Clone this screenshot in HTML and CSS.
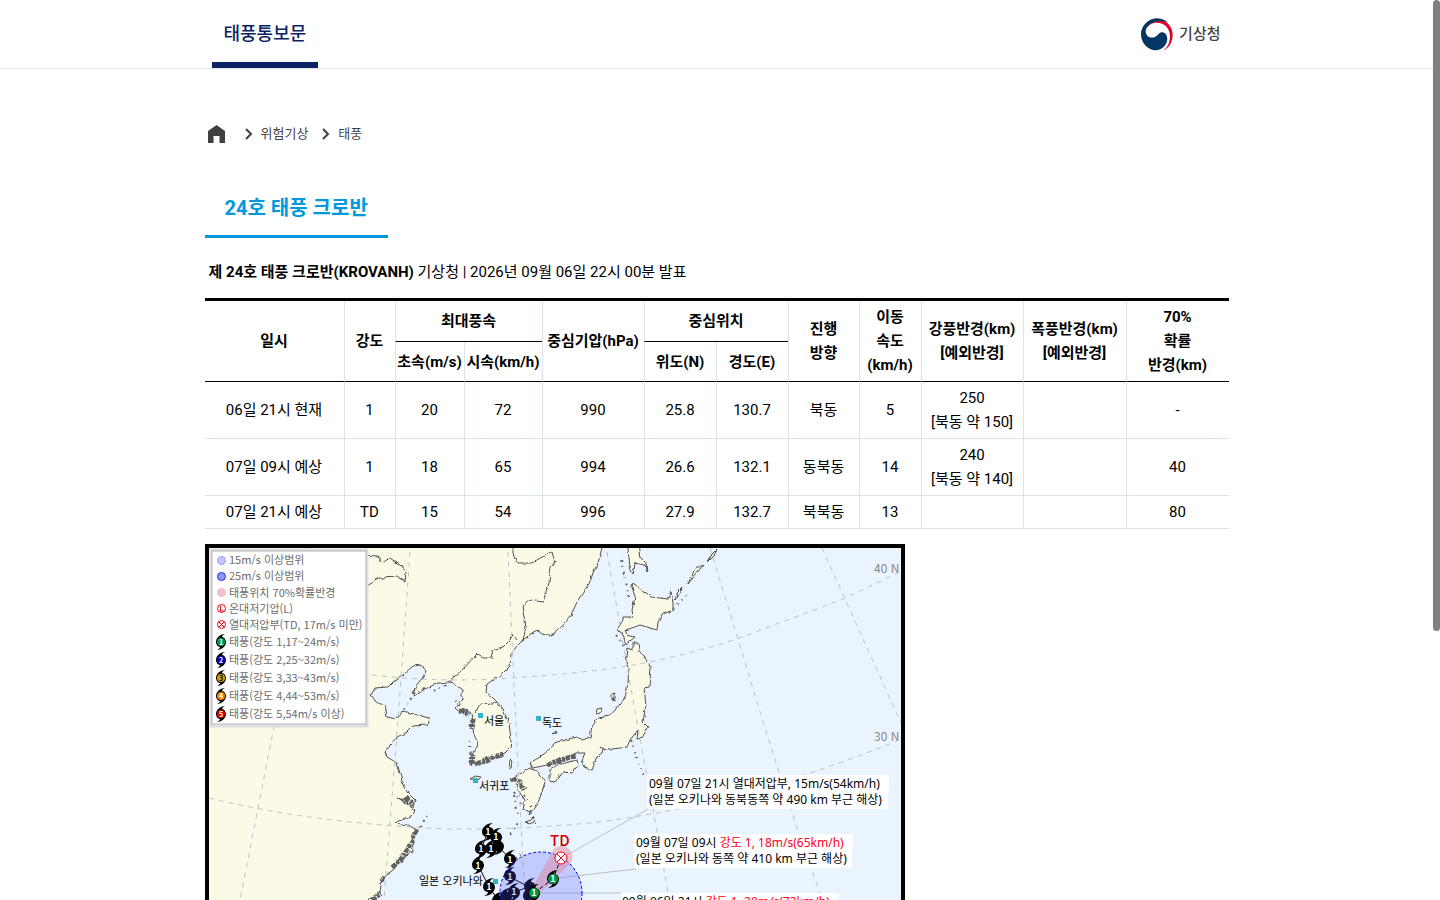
FILE: index.html
```html
<!DOCTYPE html>
<html lang="ko">
<head>
<meta charset="utf-8">
<meta name="viewport" content="width=device-width, initial-scale=1">
<title>태풍통보문 - 기상청</title>
<link rel="stylesheet" href="styles.css">
</head>
<body>
<div class="page">
<header class="site-header">
  <div class="wrap site-header__row">
    <nav><a class="nav-link" href="#">태풍통보문</a></nav>
    <a class="logo" href="#">
      <svg class="logo__mark" viewBox="0 0 98 98" aria-hidden="true">
        <path fill="#e4002b" d="M18 34C22 14 42 4 60 6 82 8 97 28 97 50 97 74 84 91 70 96 84 84 90 70 89 52 88 30 72 14 50 14 34 14 24 22 18 34Z"/>
        <path fill="#003764" d="M84 14A48 48 0 1 0 42 96C65 96 81 80 81 62 81 50 74 42 65 42 54 42 52 58 35 58 23 58 16 48 17 38 19 24 33 12 52 10 64 9 75 10 84 14Z"/>
      </svg>
      <span>기상청</span>
    </a>
  </div>
</header>
<main class="wrap">
  <nav class="crumbs" aria-label="위치">
    <a href="#" aria-label="홈"><svg class="crumbs__home" viewBox="0 0 17 18"><path fill="#404040" d="M0 6 8.500 0 17 6V18H11.500V11H5.500V18H0Z"/></svg></a>
    <svg class="crumbs__sep crumbs__sep--first" viewBox="0 0 8 12"><path d="M1 1 6 6 1 11"/></svg>
    <a href="#">위험기상</a>
    <svg class="crumbs__sep" viewBox="0 0 8 12"><path d="M1 1 6 6 1 11"/></svg>
    <a href="#">태풍</a>
  </nav>
  <h1 class="tab">24호 태풍 크로반</h1>
  <p class="issued"><strong>제 24호 태풍 크로반(KROVANH)</strong> 기상청 | 2026년 09월 06일 22시 00분 발표</p>
  <table class="forecast">
    <colgroup>
      <col class="w-date"><col class="w-grade"><col class="w-ms"><col class="w-kmh"><col class="w-wide"><col class="w-pos"><col class="w-pos"><col class="w-dir"><col class="w-speed"><col class="w-wide"><col class="w-radius"><col class="w-radius">
    </colgroup>
    <thead>
      <tr class="head-row">
        <th rowspan="2">일시</th><th rowspan="2">강도</th><th colspan="2">최대풍속</th><th rowspan="2">중심기압(hPa)</th><th colspan="2">중심위치</th>
        <th rowspan="2">진행<br>방향</th><th rowspan="2">이동<br>속도<br>(km/h)</th><th rowspan="2">강풍반경(km)<br>[예외반경]</th><th rowspan="2">폭풍반경(km)<br>[예외반경]</th><th rowspan="2">70%<br>확률<br>반경(km)</th>
      </tr>
      <tr><th>초속(m/s)</th><th>시속(km/h)</th><th>위도(N)</th><th>경도(E)</th></tr>
    </thead>
    <tbody>
      <tr><td>06일 21시 현재</td><td>1</td><td>20</td><td>72</td><td>990</td><td>25.8</td><td>130.7</td><td>북동</td><td>5</td><td>250<br>[북동 약 150]</td><td></td><td>-</td></tr>
      <tr><td>07일 09시 예상</td><td>1</td><td>18</td><td>65</td><td>994</td><td>26.6</td><td>132.1</td><td>동북동</td><td>14</td><td>240<br>[북동 약 140]</td><td></td><td>40</td></tr>
      <tr><td>07일 21시 예상</td><td>TD</td><td>15</td><td>54</td><td>996</td><td>27.9</td><td>132.7</td><td>북북동</td><td>13</td><td></td><td></td><td>80</td></tr>
    </tbody>
  </table>
  <figure class="map">
  <svg class="map__svg" viewBox="209 548 692 692" role="img" aria-label="태풍 크로반 예상 진로">
    <defs>
      <path id="storm" d="M-6 0C-6-5-1-9 5-9 2-8 1-6 1-5 5-5 6-1 6 0 6 5 1 9-5 9-2 8-1 6-1 5-5 5-6 1-6 0Z"/>
      <path id="storm-key" d="M-5 0C-5-4-1-8 4-8 2-7 1-6 1-5 4-5 5-1 5 0 5 4 1 8-4 8-2 7-1 6-1 5-4 5-5 1-5 0Z"/>
      <filter id="rough" x="0" y="0" width="100%" height="100%">
        <feTurbulence type="fractalNoise" baseFrequency="0.15" numOctaves="2" seed="4"/>
        <feDisplacementMap in="SourceGraphic" scale="4" xChannelSelector="R" yChannelSelector="G"/>
      </filter>
    </defs>
    <rect x="209" y="548" width="692" height="692" fill="#e9f4ff"/>
    <g filter="url(#rough)">
    <g class="land">
      <path d="M604 540 598 563 593 573 590 582 578 600 570 617 560 629 550 636 542 634 537 630 532 633 523 640 517 646 511 653 510 666 503 673 493 680 487 684 486 692 492 697 497 702 503 710 509 723 511 740 510 748 505 753 493 757 483 762 477 765 472 762 473 753 478 745 475 737 472 728 473 718 470 712 460 712 455 708 462 700 462 690 453 683 448 682 438 683 427 688 413 697 415 687 423 677 426 671 421 665 413 666 403 675 393 682 388 687 375 688 371 695 377 703 385 705 387 717 396 719 403 711 417 715 429 718 427 725 413 726 407 732 397 737 385 751 387 757 397 763 402 780 407 792 415 800 413 807 397 797 415 810 413 815 395 823 408 825 417 830 412 838 413 852 400 858 393 870 382 878 380 892 368 900 350 930 300 1000 200 1060V540Z"/>
      <path d="M627 540 630 567 633 575 635 563 645 565 647 572 646 563 640 557 637 540Z"/>
      <path d="M633 583 642 590 652 597 668 599 671 592 673 603 673 610 663 614 658 622 657 630 640 625 632 628 625 630 627 635 635 637 625 645 623 637 618 628 623 620 623 617 633 617 632 610 635 597 632 587Z"/>
      <path d="M627 657 628 648 633 650 633 643 639 643 640 652 648 662 651 668 649 687 644 688 646 705 643 722 648 727 642 738 637 739 638 730 630 740 627 747 620 748 605 750 600 747 603 753 597 757 592 770 585 767 582 760 585 753 577 753 567 758 557 763 547 765 533 768 530 763 543 755 557 742 577 737 583 740 590 737 592 727 598 718 610 716 625 698 628 683 629 667 625 657Z"/>
      <path d="M550 770 557 765 577 760 578 765 572 773 563 772 555 783 550 780Z"/>
      <path d="M518 775 530 768 538 772 545 782 538 803 532 812 523 810 525 800 518 790 515 782 510 780Z"/>
      <path d="M470 779 475 776 481 777 478 780Z"/>
      <path d="M509 768 510 759 512 761 511 767Z"/>
      <path d="M596 714 597 709 602 708 600 713Z"/>
      <path d="M612 700 612 694 615 693 615 699Z"/>
      <path d="M675 600 678 591 682 587 681 592Z"/>
      <path d="M688 584 691 577 695 569 703 565 697 573Z"/>
      <path d="M708 562 712 554 717 549 713 557Z"/>
      <path d="M525 823 531 820 535 816 534 822 529 824Z"/>
      <path d="M552 734 556 731 557 733Z"/>
    </g>
    <g class="borders">
      <path d="M448 682 462 670 477 654 483 658 493 658 492 650 503 647 510 640 512 634 517 640"/>
      <path d="M523 640 526 627 522 607 530 600 543 602 549 583 551 567 555 562 552 552 542 557 532 563 517 563 513 553 513 540"/>
      <path d="M362 556 377 557 383 562 390 558 400 565 406 572 405 582 398 577 380 578 362 588"/>
      <path d="M475 713 480 704 493 703 497 702"/>
    </g>
    <g class="islets">
      <path class="islets__dense" d="M476 764 482 762 493 757 504 754M472 765 473 754M459 711 469 713M473 718 472 730"/>
      <path class="islets__dense" d="M547 765 557 761 575 756M512 779 520 782 524 790M416 830 412 842 402 857 392 868M381 878 384 880M372 900 381 893M405 798 414 804"/>
      <path d="M417 832 427 816M410 850 400 864M404 710 412 697M412 693 426 689M434 691 448 684M456 700 468 716M470 740 471 768M514 792 522 806M514 795 518 814M631 740 644 778M621 560 630 600M669 613 690 592M616 635 624 646M508 868 522 852M510 835 520 820M530 812 536 825M522 641 538 631M524 795 532 808"/>
    </g>
    </g>
    <g class="grid">
      <path d="M372 675Q440 683 513 678T633 665 737 639L843 599 898 573"/>
      <path d="M209 798Q310 823 447 829 530 830 607 821 677 811 740 795 820 772 897 741"/>
      <path d="M410 552 398 720 384 900M508 552 516 727 525 900M607 552 637 722 668 892 690 980M710 548 738 639 765 728 797 828 840 950M822 548 845 599 901 723M305 548 274 727 240 900"/>
    </g>
    <g class="degree"><text x="874" y="573">40 N</text><text x="874" y="741">30 N</text></g>
    <path fill="#34b4cc" d="M478 713h5v5h-5zM536 716h5v5h-5zM473 778h5v5h-5zM493 879h5v5h-5z"/>
    <g class="place"><text x="484" y="725">서울</text><text x="542" y="727">독도</text><text x="479" y="790">서귀포</text><text x="419" y="885">일본 오키나와</text></g>

    <g class="leaders"><path d="M567 855 650 808M558 878 636 869M534 893 622 893"/></g>
    <g class="past">
      <path class="track" d="M529 887 514 892 498 900 489 887 478 865 481 849 488 832 498 846 510 859 510 877 529 887"/>
      <use href="#storm" x="488" y="832"/><use href="#storm" x="496" y="837"/><use href="#storm" x="498" y="846"/><use href="#storm" x="481" y="849"/><use href="#storm" x="491" y="849"/><use href="#storm" x="478" y="865"/><use href="#storm" x="510" y="859"/><use href="#storm" x="510" y="876"/><use href="#storm" x="489" y="887"/><use href="#storm" x="530" y="887"/><use href="#storm" x="529" y="896"/><use href="#storm" x="514" y="892"/><use href="#storm" x="506" y="897"/><use href="#storm" x="498" y="901"/>
    </g>
    <g class="num"><text x="488" y="835">1</text><text x="496" y="840">1</text><text x="481" y="852">1</text><text x="491" y="852">1</text><text x="478" y="869">1</text><text x="510" y="863">1</text><text x="510" y="880">1</text><text x="489" y="890">1</text><text x="514" y="895">1</text></g>
    <circle cx="541" cy="893" r="41" fill="#5050ff" fill-opacity=".25" stroke="#0000ee" stroke-dasharray="3 2"/>
    <path d="M532 888 551 854A11 11 0 1 1 570 864L537 896Z" fill="#e08098" fill-opacity=".45"/>
    <path class="track" d="M534 893 553 879 561 858" stroke-dasharray="4 3"/>
    <use href="#storm" x="534" y="893"/><use href="#storm" x="553" y="879"/>
    <g fill="#009a44"><circle cx="534" cy="893" r="5"/><circle cx="553" cy="879" r="5"/></g>
    <g class="num"><text x="534" y="896">1</text><text x="553" y="882">1</text></g>
    <g class="td"><circle cx="561" cy="858" r="6"/><path d="M557 854 565 862M565 854 557 862"/></g>
    <text x="550" y="846" class="td-label">TD</text>

    <path fill="#fff" d="M647 775h242v16h-1v18h-241zM634 834h219v16h-1v18h-218zM621 893h218v34h-218z"/>
    <g class="callout"><text x="649" y="788">09월 07일 21시 열대저압부, 15m/s(54km/h)</text><text x="649" y="804">(일본 오키나와 동북동쪽 약 490 km 부근 해상)</text>
    <text x="636" y="847">09월 07일 09시 <tspan fill="#ff0020">강도 1, 18m/s(65km/h)</tspan></text><text x="636" y="863">(일본 오키나와 동쪽 약 410 km 부근 해상)</text>
    <text x="622" y="906">09월 06일 21시 <tspan fill="#ff0020">강도 1, 20m/s(72km/h)</tspan></text></g>

    <rect x="211" y="550" width="156" height="176" fill="#fff" stroke="#e0dde2" stroke-width="3"/>
    <rect x="212" y="551" width="154" height="173" fill="#fff" stroke="#b4b0b8"/>
    <circle cx="221.500" cy="560.500" r="4" fill="#c4c4ff" stroke="#6080ff" stroke-dasharray="2 1"/>
    <circle cx="221.500" cy="576.500" r="4" fill="#9098ff" stroke="#2030e0"/>
    <circle cx="221.500" cy="592.500" r="4.500" fill="#f0c0c8"/>
    <g class="td"><circle cx="221.500" cy="608.500" r="4"/><path d="M220.500 606v5h3"/><circle cx="221.500" cy="624.500" r="4"/><path d="M219 622 224 627M224 622 219 627"/></g>
    <g><use href="#storm-key" x="221" y="642"/><use href="#storm-key" x="221" y="660"/><use href="#storm-key" x="221" y="678"/><use href="#storm-key" x="221" y="696"/><use href="#storm-key" x="221" y="714"/></g>
    <circle cx="221" cy="642" r="4" fill="#009a44"/><circle cx="221" cy="660" r="4" fill="#0000c8"/><circle cx="221" cy="678" r="4" fill="#d0a000"/><circle cx="221" cy="696" r="4" fill="#f08000"/><circle cx="221" cy="714" r="4" fill="#e00000"/>
    <g class="num num--small"><text x="221" y="645">1</text><text x="221" y="663">2</text><text x="221" y="681" fill="#000">3</text><text x="221" y="699">4</text><text x="221" y="717">5</text></g>
    <g class="legend">
      <text x="229" y="564">15m/s 이상범위</text><text x="229" y="580">25m/s 이상범위</text><text x="229" y="597">태풍위치 70%확률반경</text><text x="229" y="613">온대저기압(L)</text><text x="229" y="629">열대저압부(TD, 17m/s 미만)</text>
      <text x="229" y="646">태풍(강도 1,17~24m/s)</text><text x="229" y="664">태풍(강도 2,25~32m/s)</text><text x="229" y="682">태풍(강도 3,33~43m/s)</text><text x="229" y="700">태풍(강도 4,44~53m/s)</text><text x="229" y="718">태풍(강도 5,54m/s 이상)</text>
    </g>
  </svg>
  </figure>
</main>
</div>
<div class="scroll-thumb" aria-hidden="true"></div>
</body>
</html>
```
FILE: styles.css
```css
* { box-sizing: border-box; }
body {
  margin: 0;
  background: #fff;
  color: #000;
  font: 15px/24px Roboto, "Noto Sans CJK KR", sans-serif;
}
a { color: inherit; text-decoration: none; }
.page { height: 100vh; padding-right: 7px; overflow-y: auto; scrollbar-width: none; }
.wrap { width: 100%; max-width: 1024px; margin: 0 auto; }
.scroll-thumb {
  position: fixed;
  top: 0;
  right: 0;
  width: 7px;
  height: 631px;
  border-radius: 4px;
  background: #80807e;
}

.site-header { border-bottom: 1px solid #e4e4ea; }
.site-header__row { display: flex; justify-content: space-between; align-items: center; height: 68px; padding: 0 8px 0 7px; }
.nav-link {
  display: block;
  height: 68px;
  padding: 0 12px;
  border-bottom: 6px solid #0b2265;
  color: #0b2265;
  font-size: 18px;
  font-weight: 500;
  line-height: 68px;
}
.logo { display: flex; align-items: center; gap: 6px; color: #444; font-weight: 500; }
.logo__mark { width: 33px; height: 33px; }

.crumbs { display: flex; align-items: center; height: 24px; margin: 53px 0 42px; padding-left: 3px; color: #444; font-size: 13px; }
.crumbs__home { display: block; width: 17px; height: 18px; }
.crumbs__sep { width: 8px; height: 12px; margin: 0 8px 0 14px; fill: none; stroke: #404040; stroke-width: 2; }
.crumbs__sep--first { margin-left: 20px; }

.tab {
  width: fit-content;
  margin: 0;
  padding: 0 20px 6px;
  border-bottom: 3px solid #0099dd;
  color: #0099dd;
  font-size: 20px;
  font-weight: 700;
  line-height: 41px;
}
.issued { margin: 22px 0 14px; padding-left: 4px; }

.forecast { width: 100%; table-layout: fixed; border-collapse: separate; border-spacing: 0; border-top: 3px solid #000; text-align: center; white-space: nowrap; }
.forecast th, .forecast td { padding: 4px 0; border-bottom: 1px solid #dde3ee; border-left: 1px solid #dde3ee; }
.forecast th { border-bottom-color: #000; font-weight: 700; }
.forecast tr > :first-child { border-left: 0; }
.forecast thead tr + tr > :first-child { border-left: 1px solid #dde3ee; }
.head-row { height: 41px; }
.w-date { width: 139px; }
.w-grade { width: 51px; }
.w-ms { width: 69px; }
.w-kmh { width: 78px; }
.w-wide { width: 102px; }
.w-pos { width: 72px; }
.w-dir { width: 71px; }
.w-speed { width: 62px; }
.w-radius { width: 103px; }

.map { width: 100%; max-width: 700px; margin: 15px 0 40px; border: 4px solid #000; }
.map__svg { display: block; width: 100%; height: auto; font-family: "Noto Sans CJK KR", sans-serif; }
.land path { fill: #fbfae6; stroke: #505050; }
.borders path { fill: none; stroke: #505050; }
.islets path { fill: none; stroke: #606060; stroke-width: 2; stroke-dasharray: 2 4 1 5; }
.islets .islets__dense { stroke-width: 5; stroke-dasharray: 5 1 3 1; }
.grid path { fill: none; stroke: #c0c0c0; stroke-dasharray: 5 5; }
.leaders path { stroke: #c0c0c0; }
.track { fill: none; stroke: #000; }
.degree { fill: #888; font-size: 12px; }
.place { font-size: 11px; }
.callout { font-family: "Noto Sans", "Noto Sans CJK KR", sans-serif; font-size: 12px; }
.td { fill: #fff; stroke: #e80010; }
.td-label { fill: #d00000; font-size: 15px; font-weight: 500; }
.num { fill: #fff; font-size: 9px; font-weight: 700; text-anchor: middle; }
.num--small { font-size: 7px; }
.legend { fill: #6c6c6c; font-size: 11px; }
```
